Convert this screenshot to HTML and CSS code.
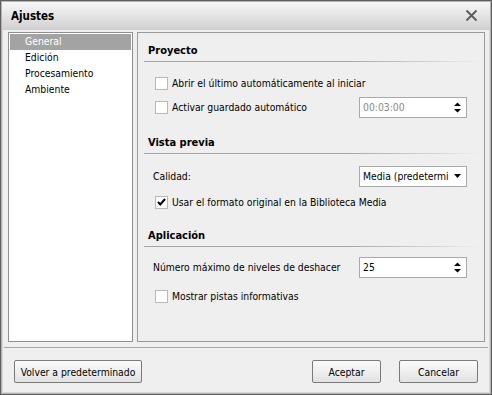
FILE: index.html
```html
<!DOCTYPE html>
<html>
<head>
<meta charset="utf-8">
<link rel="stylesheet" href="styles.css">
</head>
<body>
<div class="window">
  <div class="titlebar">
    <span class="title">Ajustes</span>
    <svg class="close" width="13" height="13" viewBox="0 0 13 13"><path d="M1.5 1.5 L11.5 11.5 M11.5 1.5 L1.5 11.5" stroke="#5a5a5a" stroke-width="1.8" fill="none"/></svg>
  </div>
  <div class="body">
    <div class="main">
      <ul class="sidebar">
        <li class="item selected">General</li>
        <li class="item">Edición</li>
        <li class="item">Procesamiento</li>
        <li class="item">Ambiente</li>
      </ul>
      <div class="panel">
        <div class="sec-head first">Proyecto</div>
        <div class="row r1">
          <span class="check"></span><span class="label">Abrir el último automáticamente al iniciar</span>
        </div>
        <div class="row r2">
          <span class="check"></span><span class="label">Activar guardado automático</span>
          <div class="field spin disabled"><span class="val">00:03:00</span>
            <svg class="arrows" width="7" height="11" viewBox="0 0 7 11"><path d="M3.5 0.5 L7 4 L0 4 Z M0 7 L7 7 L3.5 10.5 Z" fill="#000"/></svg>
          </div>
        </div>
        <div class="sec-head">Vista previa</div>
        <div class="row r3">
          <span class="label plain">Calidad:</span>
          <div class="field select"><span class="val">Media (predetermi</span>
            <svg class="arrows" width="7" height="4" viewBox="0 0 7 4"><path d="M0 0 L7 0 L3.5 4 Z" fill="#000"/></svg>
          </div>
        </div>
        <div class="row r4">
          <span class="check checked"><svg width="11" height="11" viewBox="0 0 11 11"><path d="M2 5 L4.3 7.5 L9 2" stroke="#000" stroke-width="2" fill="none"/></svg></span><span class="label">Usar el formato original en la Biblioteca Media</span>
        </div>
        <div class="sec-head s3">Aplicación</div>
        <div class="row r5">
          <span class="label plain">Número máximo de niveles de deshacer</span>
          <div class="field spin"><span class="val">25</span>
            <svg class="arrows" width="7" height="11" viewBox="0 0 7 11"><path d="M3.5 0.5 L7 4 L0 4 Z M0 7 L7 7 L3.5 10.5 Z" fill="#000"/></svg>
          </div>
        </div>
        <div class="row r6">
          <span class="check"></span><span class="label">Mostrar pistas informativas</span>
        </div>
      </div>
    </div>
    <div class="footer">
      <button class="btn wide">Volver a predeterminado</button>
      <div class="spacer"></div>
      <button class="btn ok">Aceptar</button>
      <button class="btn cancel">Cancelar</button>
    </div>
  </div>
</div>
</body>
</html>
```

FILE: styles.css
```css
* { box-sizing: border-box; }
html, body { margin: 0; padding: 0; background: #ffffff; }
body {
  font-family: "DejaVu Sans Condensed", "DejaVu Sans", Tahoma, sans-serif;
  font-stretch: condensed;
  font-size: 10.3px;
  color: #000;
}

.window {
  width: 492px;
  height: 395px;
  border: 1px solid #5e5e5e;
  background: #efefef;
  display: flex;
  flex-direction: column;
  box-shadow: inset 0 0 0 1px #b4b4b4, inset 0 0 0 2px #d8d8d8;
}

.titlebar {
  height: 28px;
  margin: 1px 1px 0 1px;
  background: linear-gradient(#f6f6f6, #d2d2d2);
  display: flex;
  align-items: center;
  padding: 0 12px 0 9px;
  border-bottom: 1px solid #cfcfcf;
}
.title { font-weight: bold; font-size: 11.5px; flex: 1; color: #000; }
.close { display: block; }

.body {
  flex: 1;
  display: flex;
  flex-direction: column;
  padding: 2px 6px 0 7px;
}

.main {
  display: flex;
  gap: 4px;
  height: 310px;
}

.sidebar {
  list-style: none;
  margin: 0;
  padding: 1px;
  width: 125px;
  background: #fff;
  border: 1px solid #8f8f8f;
}
.item {
  height: 16px;
  line-height: 15px;
  padding-left: 15px;
}
.item.selected { background: #a3a3a3; color: #fff; }

.panel {
  flex: 1;
  border: 1px solid #9a9a9a;
  padding: 0 3px 0 6px;
}

.sec-head {
  height: 23px;
  display: flex;
  align-items: center;
  padding-left: 4px;
  font-weight: bold;
  font-size: 11px;
  border-bottom: 1px solid;
  border-image: linear-gradient(to right, #a6a6a6 60%, #efefef) 1;
  margin-top: 12px;
}
.sec-head.first { margin-top: 6px; }
.sec-head.s3 { margin-top: 9px; }

.row {
  display: flex;
  align-items: center;
  height: 24px;
  padding-left: 11px;
  padding-right: 14px;
}
.r1 { margin-top: 9px; }
.r3 { margin-top: 9px; height: 26px; padding-left: 9px; }
.r4 { height: 26px; }
.r5 { margin-top: 8px; padding-left: 9px; }
.r6 { margin-top: 5px; }

.check {
  width: 13px;
  height: 13px;
  background: #fff;
  border: 1px solid #b9b9b9;
  margin-right: 4px;
  display: flex;
  align-items: center;
  justify-content: center;
}
.label { white-space: nowrap; }

.field {
  margin-left: auto;
  width: 108px;
  height: 21px;
  background: #fff;
  border: 1px solid #a9a9a9;
  display: flex;
  align-items: center;
  padding: 0 5px 0 3px;
}
.field .val { flex: 1; white-space: nowrap; overflow: hidden; }
.field.disabled .val { color: #8a8a8a; }
.arrows { display: block; }

.footer {
  margin-top: 5px;
  border-top: 1px solid #a8a8a8;
  display: flex;
  align-items: flex-start;
  padding: 12px 5px 0 5px;
  margin-left: -4px;
  margin-right: -3px;
}
.spacer { flex: 1; }
.btn {
  height: 23px;
  font-family: "DejaVu Sans Condensed", "DejaVu Sans", Tahoma, sans-serif;
  font-stretch: condensed;
  font-size: 10.3px;
  color: #000;
  border: 1px solid #7a7a7a;
  border-radius: 2px;
  background: linear-gradient(#fbfbfb, #e2e2e2);
  padding: 0;
}
.btn.wide { width: 128px; margin-left: 5px; }
.btn.ok { width: 69px; margin-right: 18px; }
.btn.cancel { width: 79px; margin-right: 5px; }
```
